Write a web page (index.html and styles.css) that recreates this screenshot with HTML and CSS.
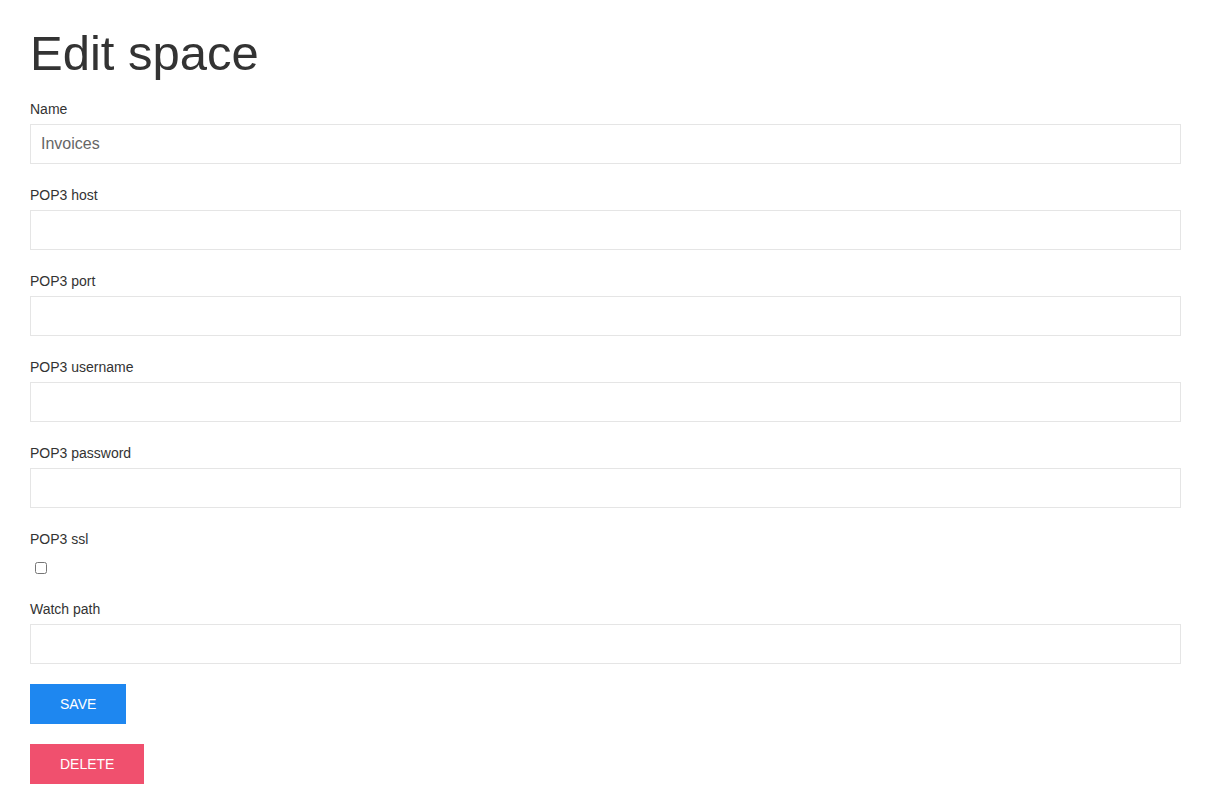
FILE: index.html
```html
<!DOCTYPE html>
<html>
<head>
<meta charset="utf-8">
<link rel="stylesheet" href="styles.css">
</head>
<body>
<div class="page">
  <h1 class="title">Edit space</h1>
  <form class="form">
    <div class="field">
      <label class="label">Name</label>
      <input class="input" type="text" value="Invoices">
    </div>
    <div class="field">
      <label class="label">POP3 host</label>
      <input class="input" type="text">
    </div>
    <div class="field">
      <label class="label">POP3 port</label>
      <input class="input" type="text">
    </div>
    <div class="field">
      <label class="label">POP3 username</label>
      <input class="input" type="text">
    </div>
    <div class="field">
      <label class="label">POP3 password</label>
      <input class="input" type="password">
    </div>
    <div class="field">
      <label class="label">POP3 ssl</label>
      <div class="check-row"><input class="check" type="checkbox"></div>
    </div>
    <div class="field field-last">
      <label class="label">Watch path</label>
      <input class="input" type="text">
    </div>
    <div class="actions">
      <button type="button" class="btn btn-primary">Save</button>
      <button type="button" class="btn btn-danger">Delete</button>
    </div>
  </form>
</div>
</body>
</html>
```
FILE: styles.css
```css
html, body {
  margin: 0;
  padding: 0;
  background: #fff;
}
body {
  font-family: "Liberation Sans", Arial, sans-serif;
  color: #333;
}
.page {
  padding: 24px 27px 0 30px;
}
.title {
  margin: 0 0 17px 0;
  font-size: 49px;
  line-height: 58px;
  font-weight: 400;
  color: #333;
}
.form {
  display: flex;
  flex-direction: column;
}
.field {
  display: flex;
  flex-direction: column;
  margin-bottom: 21px;
}
.field-last {
  margin-bottom: 20px;
}
.label {
  font-size: 14px;
  line-height: 20px;
  color: #333;
  margin-bottom: 5px;
}
.input {
  box-sizing: border-box;
  height: 40px;
  width: 100%;
  margin: 0;
  padding: 0 10px;
  border: 1px solid #e5e5e5;
  background: #fff;
  font-family: inherit;
  font-size: 16px;
  color: #666;
  outline: none;
}
.check-row {
  box-sizing: border-box;
  height: 24px;
  padding-top: 8px;
  display: flex;
  align-items: flex-start;
}
.check {
  width: 12px;
  height: 12px;
  margin: 0 0 0 5px;
}
.actions {
  display: flex;
  flex-direction: column;
  align-items: flex-start;
  gap: 20px;
}
.btn {
  box-sizing: border-box;
  height: 40px;
  padding: 0 30px;
  border: none;
  font-family: inherit;
  font-size: 14px;
  line-height: 40px;
  text-transform: uppercase;
  color: #fff;
  cursor: pointer;
}
.btn-primary {
  background: #1e87f0;
}
.btn-danger {
  background: #f0506e;
}
```
